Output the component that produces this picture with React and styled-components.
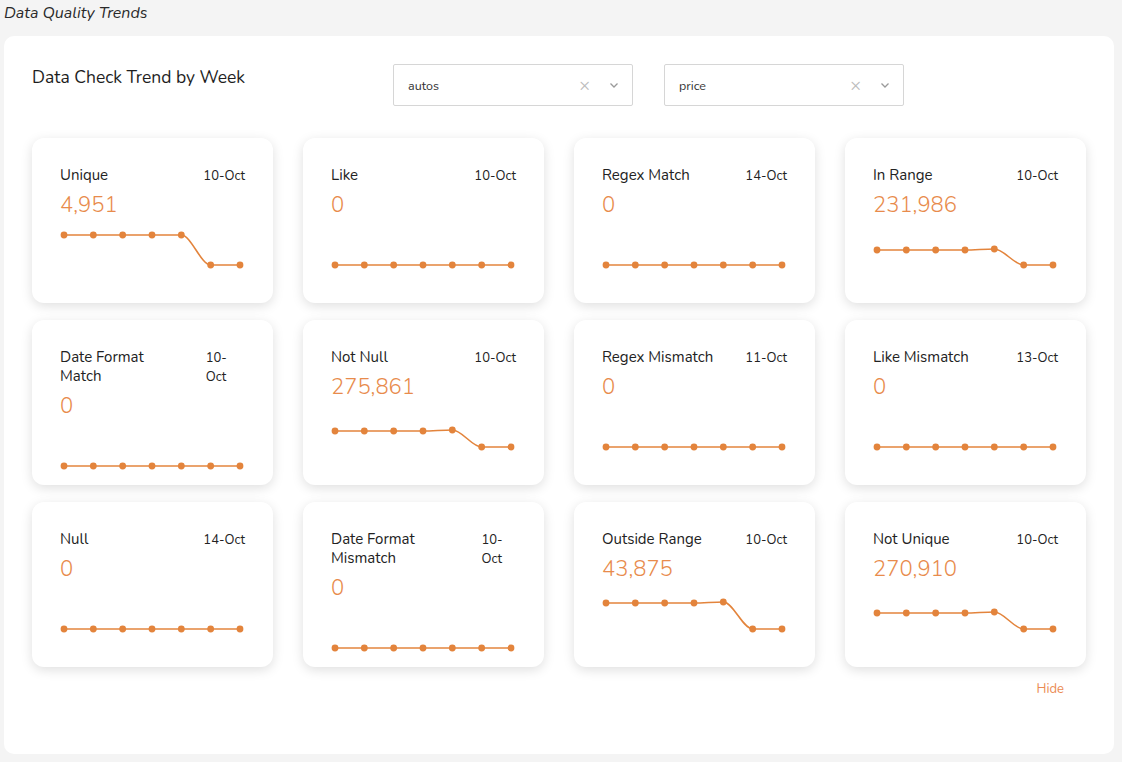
import styled, { createGlobalStyle } from 'styled-components';

const GlobalStyle = createGlobalStyle`
  html, body {
    margin: 0;
    padding: 0;
    background: #f4f4f4;
    font-family: "Nunito", "Open Sans", "Liberation Sans", sans-serif;
    color: #222;
  }
  * { box-sizing: border-box; }
`

const Page = styled.div`
  height: 762px;
  padding: 0 8px 8px 4px;
  display: flex;
  flex-direction: column;
`
const PageTitle = styled.div`
  font-size: 16px;
  font-style: italic;
  line-height: 26px;
  color: #2a2a2a;
  margin-bottom: 10px;
`
const Panel = styled.div`
  flex: 1;
  background: #fff;
  border-radius: 10px;
  padding: 28px;
  display: flex;
  flex-direction: column;
`
const Header = styled.div`
  display: flex;
  align-items: flex-start;
  column-gap: 31px;
  margin-bottom: 32px;
`
const HeaderTitle = styled.div`
  width: 330px;
  font-size: 17.5px;
  line-height: 27px;
  color: #1e1e1e;
`
const Select = styled.div`
  width: 240px;
  height: 42px;
  border: 1px solid #d6d6d6;
  border-radius: 2px;
  display: flex;
  align-items: center;
  padding: 0 12px 0 14px;
  font-size: 12.5px;
  color: #333;
`
const SelectValue = styled.span`
  flex: 1;
`
const ClearIcon = styled.span`
  color: #bdbdbd;
  font-size: 18px;
  margin-right: 18px;
  line-height: 1;
`
const Grid = styled.div`
  display: grid;
  grid-template-columns: repeat(4, 1fr);
  column-gap: 30px;
  row-gap: 17px;
`
const Card = styled.div`
  height: 165px;
  background: #fff;
  border-radius: 12px;
  box-shadow: 0 3px 12px rgba(0, 0, 0, 0.13);
  padding: 28px 28px 0;
`
const CardTop = styled.div`
  display: flex;
  justify-content: space-between;
  column-gap: 24px;
`
const CardTitle = styled.div`
  font-size: 15px;
  line-height: 19px;
  color: #222;
`
const CardDate = styled.div`
  font-size: 13px;
  line-height: 19px;
  padding-top: 1px;
  color: #222;
`
const CardValue = styled.div`
  margin-top: 5px;
  font-size: 22px;
  line-height: 28px;
  font-weight: 300;
  color: #e88b4c;
`
const Chart = styled.svg`
  display: block;
  margin-top: 12px;
  overflow: visible;
`
const Footer = styled.div`
  display: flex;
  justify-content: flex-end;
  padding-right: 22px;
  margin-top: 13px;
`
const HideLink = styled.a`
  font-size: 13px;
  color: #eb8a52;
  cursor: pointer;
`

const ORANGE = '#e3843c';

const cards = [
  { title: 'Unique', date: '10-Oct', value: '4,951', pts: [30, 30, 30, 30, 30, 0, 0] },
  { title: 'Like', date: '10-Oct', value: '0', pts: [0, 0, 0, 0, 0, 0, 0] },
  { title: 'Regex Match', date: '14-Oct', value: '0', pts: [0, 0, 0, 0, 0, 0, 0] },
  { title: 'In Range', date: '10-Oct', value: '231,986', pts: [15, 15, 15, 15, 16, 0, 0] },
  { title: 'Date Format Match', date: '10-Oct', value: '0', pts: [0, 0, 0, 0, 0, 0, 0] },
  { title: 'Not Null', date: '10-Oct', value: '275,861', pts: [16, 16, 16, 16, 17, 0, 0] },
  { title: 'Regex Mismatch', date: '11-Oct', value: '0', pts: [0, 0, 0, 0, 0, 0, 0] },
  { title: 'Like Mismatch', date: '13-Oct', value: '0', pts: [0, 0, 0, 0, 0, 0, 0] },
  { title: 'Null', date: '14-Oct', value: '0', pts: [0, 0, 0, 0, 0, 0, 0] },
  { title: 'Date Format Mismatch', date: '10-Oct', value: '0', pts: [0, 0, 0, 0, 0, 0, 0] },
  { title: 'Outside Range', date: '10-Oct', value: '43,875', pts: [26, 26, 26, 26, 27, 0, 0] },
  { title: 'Not Unique', date: '10-Oct', value: '270,910', pts: [16, 16, 16, 16, 17, 0, 0] },
];

// monotone-x curve, same idea as d3.curveMonotoneX
const sign = x => (x < 0 ? -1 : 1);
function monotonePath(xs, ys) {
  const n = xs.length;
  const t = new Array(n).fill(0);
  for (let i = 1; i < n - 1; i++) {
    const h0 = xs[i] - xs[i - 1], h1 = xs[i + 1] - xs[i];
    const s0 = (ys[i] - ys[i - 1]) / h0, s1 = (ys[i + 1] - ys[i]) / h1;
    const p = (s0 * h1 + s1 * h0) / (h0 + h1);
    t[i] = (sign(s0) + sign(s1)) * Math.min(Math.abs(s0), Math.abs(s1), 0.5 * Math.abs(p)) || 0;
  }
  const h = xs[1] - xs[0];
  t[0] = (3 * (ys[1] - ys[0]) / h - t[1]) / 2;
  const hl = xs[n - 1] - xs[n - 2];
  t[n - 1] = (3 * (ys[n - 1] - ys[n - 2]) / hl - t[n - 2]) / 2;
  let d = `M${xs[0]},${ys[0]}`;
  for (let i = 0; i < n - 1; i++) {
    const dx = (xs[i + 1] - xs[i]) / 3;
    d += ` C${xs[i] + dx},${ys[i] + dx * t[i]} ${xs[i + 1] - dx},${ys[i + 1] - dx * t[i + 1]} ${xs[i + 1]},${ys[i + 1]}`;
  }
  return d;
}

function TrendChart({ pts }) {
  const base = 34;
  const xs = pts.map((_, i) => 4 + i * (176 / 6));
  const ys = pts.map(v => base - v);
  return (
    <Chart width="185" height="44" viewBox="0 0 185 44">
      <path d={monotonePath(xs, ys)} fill="none" stroke={ORANGE} strokeWidth="1.6" />
      {xs.map((x, i) => (
        <circle key={i} cx={x} cy={ys[i]} r="3.4" fill={ORANGE} />
      ))}
    </Chart>
  );
}

function Chevron() {
  return (
    <svg width="12" height="12" viewBox="0 0 12 12">
      <path d="M2.5 4.5 L6 8 L9.5 4.5" fill="none" stroke="#9a9a9a" strokeWidth="1.3" />
    </svg>
  );
}

function App() {
  return (
    <Page>
      <GlobalStyle />
      <PageTitle>Data Quality Trends</PageTitle>
      <Panel>
        <Header>
          <HeaderTitle>Data Check Trend by Week</HeaderTitle>
          <Select>
            <SelectValue>autos</SelectValue>
            <ClearIcon>×</ClearIcon>
            <Chevron />
          </Select>
          <Select>
            <SelectValue>price</SelectValue>
            <ClearIcon>×</ClearIcon>
            <Chevron />
          </Select>
        </Header>
        <Grid>
          {cards.map(c => (
            <Card key={c.title}>
              <CardTop>
                <CardTitle>{c.title}</CardTitle>
                <CardDate>{c.date}</CardDate>
              </CardTop>
              <CardValue>{c.value}</CardValue>
              <TrendChart pts={c.pts} />
            </Card>
          ))}
        </Grid>
        <Footer>
          <HideLink>Hide</HideLink>
        </Footer>
      </Panel>
    </Page>
  );
}

export default App;
